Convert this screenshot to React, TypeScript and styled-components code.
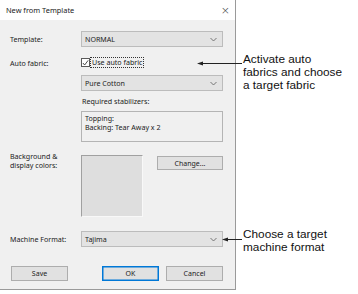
import { createGlobalStyle, styled } from "styled-components";

const GlobalStyle = createGlobalStyle`
  html, body {
    margin: 0;
    padding: 0;
    background: #ffffff;
  }
  body {
    width: 358px;
    height: 294px;
    overflow: hidden;
  }
`;

function Chevron() {
  return (
    <svg width="7" height="5" viewBox="0 0 7 5">
      <path d="M0.5 1 L3.5 4 L6.5 1" fill="none" stroke="#6a6a6a" strokeWidth="0.9" />
    </svg>
  );
}

function Combo({ value }: { value: string }) {
  return (
    <ComboBox>
      <span>{value}</span>
      <Chevron />
    </ComboBox>
  );
}

function Arrow({ length }: { length: number }) {
  return (
    <svg width={length} height="7" viewBox={`0 0 ${length} 7`}>
      <path d={`M5 3.5 H${length}`} stroke="#222" strokeWidth="1" />
      <path d="M0 3.5 L6 1.5 L6 5.5 Z" fill="#222" />
    </svg>
  );
}

export default function App() {
  return (
    <Page>
      <GlobalStyle />
      <Dialog>
        <TitleBar>
          <Title>New from Template</Title>
          <Close>×</Close>
        </TitleBar>
        <Body>
          <Row $mt={11}>
            <Label>Template:</Label>
            <Combo value="NORMAL" />
          </Row>
          <Row $mt={10}>
            <Label>Auto fabric:</Label>
            <CheckRow>
              <CheckBox>
                <svg width="8" height="8" viewBox="0 0 8 8">
                  <path d="M1 4 L3 6.3 L7 1" fill="none" stroke="#333" strokeWidth="1" />
                </svg>
              </CheckBox>
              <FocusText>Use auto fabric</FocusText>
            </CheckRow>
          </Row>
          <Row $mt={7}>
            <Label />
            <Combo value="Pure Cotton" />
          </Row>
          <Row $mt={5}>
            <Label />
            <Caption>Required stabilizers:</Caption>
          </Row>
          <Row $mt={5}>
            <Label />
            <TextArea>
              <div>Topping:</div>
              <div>Backing: Tear Away x 2</div>
            </TextArea>
          </Row>
          <Row $mt={13} $top>
            <Label $multi>
              Background &amp;
              <br />
              display colors:
            </Label>
            <ColorField>
              <Swatch />
              <SmallButton>Change...</SmallButton>
            </ColorField>
          </Row>
          <Row $mt={14}>
            <Label>Machine Format:</Label>
            <Combo value="Tajima" />
          </Row>
          <Buttons>
            <PushButton>Save</PushButton>
            <ButtonGroup>
              <PushButton $default>OK</PushButton>
              <PushButton>Cancel</PushButton>
            </ButtonGroup>
          </Buttons>
        </Body>
      </Dialog>

      <Callout style={{ top: 53, left: 197 }}>
        <ArrowSlot $y={7}>
          <Arrow length={45} />
        </ArrowSlot>
        <CalloutText>
          Activate auto
          <br />
          fabrics and choose
          <br />
          a target fabric
        </CalloutText>
      </Callout>

      <Callout style={{ top: 228, left: 222 }}>
        <ArrowSlot $y={8}>
          <Arrow length={20} />
        </ArrowSlot>
        <CalloutText>
          Choose a target
          <br />
          machine format
        </CalloutText>
      </Callout>
    </Page>
  );
}

const Page = styled.div`
  position: relative;
  width: 358px;
  height: 294px;
  font-family: "Noto Sans", "Open Sans", sans-serif;
`;

const Dialog = styled.div`
  width: 235px;
  height: 289px;
  background: #f0f0f0;
  border-right: 1px solid #9a9a9a;
  border-bottom: 1px solid #9a9a9a;
  display: flex;
  flex-direction: column;
`;

const TitleBar = styled.div`
  height: 20px;
  background: #ffffff;
  display: flex;
  align-items: center;
  justify-content: space-between;
  padding: 0 5px 0 6px;
`;

const Title = styled.span`
  font-size: 7.4px;
  color: #222;
`;

const Close = styled.span`
  font-family: "DejaVu Sans", sans-serif;
  font-size: 11px;
  font-weight: 200;
  color: #444;
  margin-top: 1px;
`;

const Body = styled.div`
  flex: 1;
  padding: 0 12px 0 10px;
  display: flex;
  flex-direction: column;
`;

const Row = styled.div<{ $mt: number; $top?: boolean }>`
  display: flex;
  align-items: ${(p) => (p.$top ? "flex-start" : "center")};
  margin-top: ${(p) => p.$mt}px;
`;

const Label = styled.div<{ $multi?: boolean }>`
  width: 71px;
  flex-shrink: 0;
  font-size: 7.1px;
  line-height: ${(p) => (p.$multi ? "9px" : "normal")};
  color: #222;
  margin-top: ${(p) => (p.$multi ? "-3px" : "0")};
`;

const ComboBox = styled.div`
  width: 142px;
  height: 16px;
  box-sizing: border-box;
  background: #e3e3e3;
  border: 1px solid #bcbcbc;
  display: flex;
  align-items: center;
  justify-content: space-between;
  padding: 0 5px 0 3px;
  font-size: 7.1px;
  color: #222;
`;

const CheckRow = styled.div`
  display: flex;
  align-items: center;
  height: 11px;
`;

const CheckBox = styled.div`
  width: 9px;
  height: 9px;
  box-sizing: border-box;
  border: 1px solid #5a5a5a;
  background: #fff;
  display: flex;
  align-items: center;
  justify-content: center;
`;

const FocusText = styled.span`
  border: 1px dotted #333;
  padding: 0 1px;
  font-size: 7.1px;
  line-height: 9px;
  color: #222;
`;

const Caption = styled.div`
  font-size: 7.1px;
  color: #222;
  padding-left: 1px;
`;

const TextArea = styled.div`
  width: 142px;
  height: 31px;
  box-sizing: border-box;
  border: 1px solid #b4b4b4;
  background: #f0f0f0;
  padding: 2px 3px;
  font-size: 7.1px;
  line-height: 9px;
  color: #222;
`;

const ColorField = styled.div`
  width: 142px;
  display: flex;
  justify-content: space-between;
  align-items: flex-start;
`;

const Swatch = styled.div`
  width: 62px;
  height: 62px;
  box-sizing: border-box;
  background: #dedede;
  border-top: 1px solid #a0a0a0;
  border-left: 1px solid #a0a0a0;
  border-right: 1px solid #f8f8f8;
  border-bottom: 1px solid #f8f8f8;
`;

const SmallButton = styled.div`
  width: 66px;
  height: 14px;
  margin-top: 1px;
  box-sizing: border-box;
  background: #e1e1e1;
  border: 1px solid #adadad;
  font-size: 7px;
  color: #222;
  display: flex;
  align-items: center;
  justify-content: center;
`;

const Buttons = styled.div`
  margin-top: 19px;
  padding-left: 1px;
  display: flex;
  justify-content: space-between;
`;

const ButtonGroup = styled.div`
  display: flex;
  gap: 7px;
`;

const PushButton = styled.div<{ $default?: boolean }>`
  width: 57px;
  height: 15px;
  box-sizing: border-box;
  background: #e1e1e1;
  border: 1px solid ${(p) => (p.$default ? "#0078d7" : "#adadad")};
  box-shadow: ${(p) => (p.$default ? "inset 0 0 0 0.5px #0078d7" : "none")};
  font-size: 7px;
  color: #222;
  display: flex;
  align-items: center;
  justify-content: center;
`;

const Callout = styled.div`
  position: absolute;
  display: flex;
  align-items: flex-start;
`;

const ArrowSlot = styled.div<{ $y: number }>`
  margin-top: ${(p) => p.$y}px;
  display: flex;
`;

const CalloutText = styled.div`
  font-family: "Liberation Sans", Arial, sans-serif;
  font-size: 11.8px;
  line-height: 13.2px;
  color: #111;
  padding-left: 1px;
`;
